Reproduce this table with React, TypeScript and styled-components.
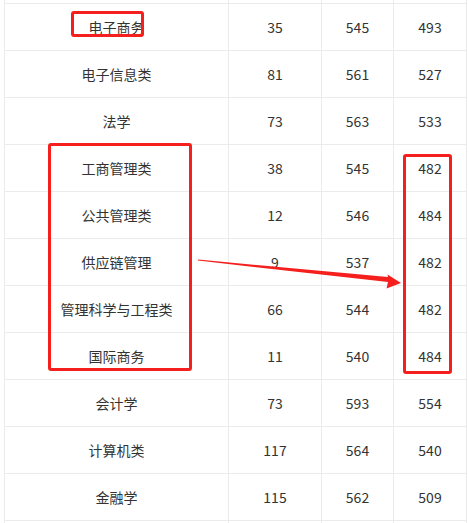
import React from 'react';
import styled, { createGlobalStyle } from 'styled-components';

const GlobalStyle = createGlobalStyle`
  html, body {
    margin: 0;
    padding: 0;
    background: #ffffff;
  }
`;

const Page = styled.div`
  position: relative;
  width: 469px;
  height: 523px;
  overflow: hidden;
  padding-left: 4px;
  box-sizing: border-box;
  font-family: 'Noto Sans CJK SC', 'Noto Sans', sans-serif;
  font-size: 14px;
  color: #333333;
`;

const Table = styled.div`
  display: grid;
  grid-template-columns: 224px 93px 72px 73px;
  width: 463px;
  border-left: 1px solid #ebebeb;
`;

const Cell = styled.div<{ $stub?: 'top' | 'bottom' }>`
  box-sizing: border-box;
  height: ${p => (p.$stub === 'top' ? '4px' : p.$stub === 'bottom' ? '3px' : '47px')};
  border-right: 1px solid #ebebeb;
  border-bottom: ${p => (p.$stub === 'bottom' ? 'none' : '1px solid #ebebeb')};
  display: flex;
  align-items: center;
  justify-content: center;
  line-height: 1;
  white-space: nowrap;
`;

const Mark = styled.div<{ $x: number; $y: number; $w: number; $h: number }>`
  position: absolute;
  left: ${p => p.$x}px;
  top: ${p => p.$y}px;
  width: ${p => p.$w}px;
  height: ${p => p.$h}px;
  box-sizing: border-box;
  border: 3px solid #f5201e;
  border-radius: 3px;
  pointer-events: none;
`;

const Arrow = styled.svg`
  position: absolute;
  left: 0;
  top: 0;
  pointer-events: none;
`;

const rows: [string, number, number, number][] = [
  ['电子商务', 35, 545, 493],
  ['电子信息类', 81, 561, 527],
  ['法学', 73, 563, 533],
  ['工商管理类', 38, 545, 482],
  ['公共管理类', 12, 546, 484],
  ['供应链管理', 9, 537, 482],
  ['管理科学与工程类', 66, 544, 482],
  ['国际商务', 11, 540, 484],
  ['会计学', 73, 593, 554],
  ['计算机类', 117, 564, 540],
  ['金融学', 115, 562, 509],
];

const App: React.FC = () => {
  return (
    <Page>
      <GlobalStyle />
      <Table>
        {[0, 1, 2, 3].map(i => <Cell key={`t${i}`} $stub="top" />)}
        {rows.map(([name, a, b, c]) => (
          <React.Fragment key={name}>
            <Cell>{name}</Cell>
            <Cell>{a}</Cell>
            <Cell>{b}</Cell>
            <Cell>{c}</Cell>
          </React.Fragment>
        ))}
        {[0, 1, 2, 3].map(i => <Cell key={`b${i}`} $stub="bottom" />)}
      </Table>
      <Mark $x={71} $y={11} $w={73} $h={26} />
      <Mark $x={48} $y={143} $w={144} $h={228} />
      <Mark $x={403} $y={154} $w={49} $h={220} />
      <Arrow width="469" height="523" viewBox="0 0 469 523">
        <polygon
          fill="#f5201e"
          points="198,259.6 388,277 387.5,274.5 401,283 386.5,288.5 388,282 198,260.6"
        />
      </Arrow>
    </Page>
  );
};

export default App;
